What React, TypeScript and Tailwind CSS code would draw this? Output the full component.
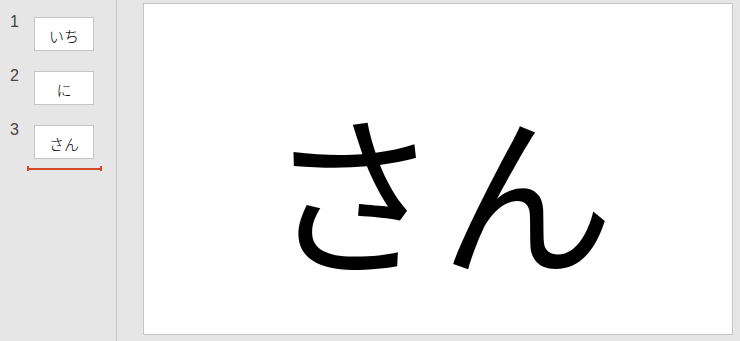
import React from "react";

const jp = { fontFamily: '"Noto Sans CJK JP", "Noto Sans", sans-serif' };

function Thumb({ n, text, selected }: { n: number; text: string; selected?: boolean }) {
  return (
    <div className="relative flex h-[54px]">
      <div className="-mt-[3px] w-[34px] pl-[10px] text-[16px] leading-[16px] text-[#444]" style={{ fontFamily: '"Liberation Sans", Arial, sans-serif' }}>
        {n}
      </div>
      <div className="flex h-[34px] w-[60px] items-center justify-center border border-[#c6c6c6] bg-white pt-[3px] text-[15px] font-light leading-none text-black" style={jp}>
        {text}
      </div>
      {selected && (
        <div className="absolute left-[27px] top-[41px] flex h-[5px] w-[75px] items-center">
          <div className="h-[5px] w-[2px] bg-[#d24726]" />
          <div className="h-[2px] flex-1 bg-[#d24726]" />
          <div className="h-[5px] w-[2px] bg-[#d24726]" />
        </div>
      )}
    </div>
  );
}

export default function App() {
  return (
    <div className="flex h-[341px] w-[740px] overflow-hidden bg-[#e6e6e6]">
      <div className="flex w-[117px] flex-col border-r border-[#c6c6c6] pt-[17px]">
        <Thumb n={1} text="いち" />
        <Thumb n={2} text="に" />
        <Thumb n={3} text="さん" selected />
      </div>
      <div className="pl-[26px] pt-[3px]">
        <div className="flex h-[332px] w-[590px] items-center justify-center border border-[#c6c6c6] bg-white pl-[4px] pt-[34px]">
          <div className="text-[174px] leading-none text-black" style={jp}>
            さん
          </div>
        </div>
      </div>
    </div>
  );
}
